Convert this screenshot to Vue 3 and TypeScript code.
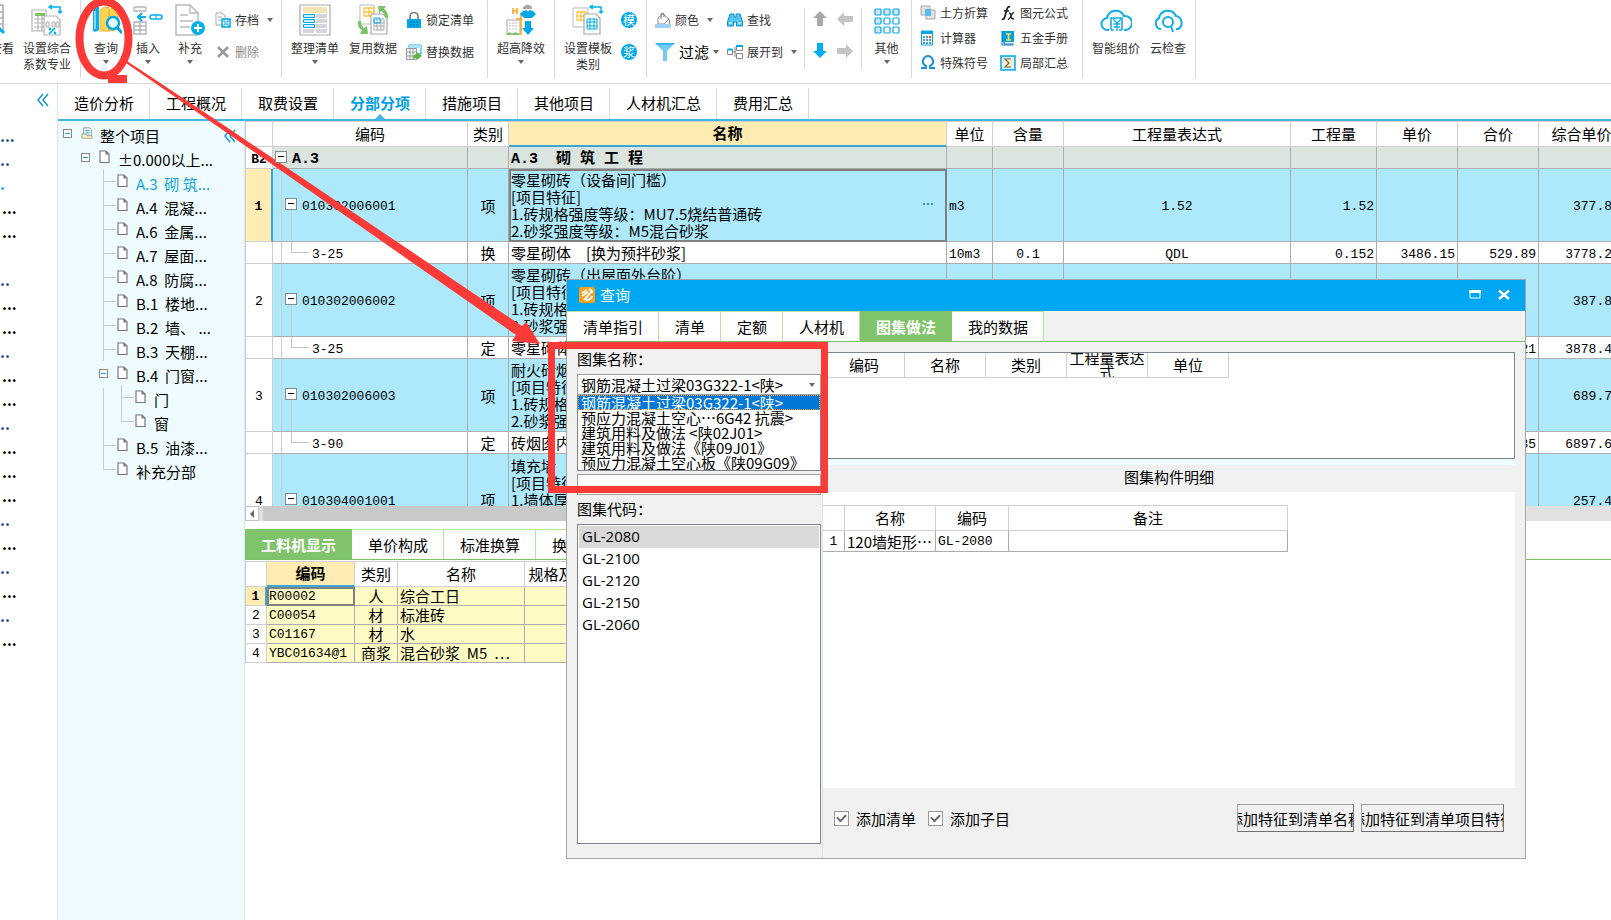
<script setup lang="ts">
import { ref } from 'vue'

interface TreeNode { label: string; depth: number; open?: boolean; active?: boolean; cls?: string }
interface BillRow {
  kind: 'group' | 'item' | 'sub'
  no: string
  code: string
  type: string
  name: string[]
  unit?: string
  ratio?: string
  expr?: string
  qty?: string
  price?: string
  total?: string
  composite?: string
  current?: boolean
  tall?: boolean
}

const mainTabs = ['造价分析', '工程概况', '取费设置', '分部分项', '措施项目', '其他项目', '人材机汇总', '费用汇总']
const activeMain = ref('分部分项')

const gutter = [
  { t: '...', c: 'navy' }, { t: '..', c: 'navy' }, { t: '.', c: 'cyan' }, { t: '...', c: 'dark' }, { t: '...', c: 'dark' },
  { t: '', c: 'dark' }, { t: '..', c: 'navy' }, { t: '...', c: 'dark' }, { t: '...', c: 'dark' }, { t: '..', c: 'navy' },
  { t: '...', c: 'dark' }, { t: '...', c: 'dark' }, { t: '..', c: 'navy' }, { t: '...', c: 'dark' }, { t: '...', c: 'dark' },
  { t: '...', c: 'dark' }, { t: '..', c: 'navy' }, { t: '...', c: 'dark' }, { t: '..', c: 'navy' }, { t: '...', c: 'dark' },
  { t: '..', c: 'navy' }, { t: '...', c: 'dark' },
]

const tree: TreeNode[] = [
  { label: '整个项目', depth: 0, open: true },
  { label: '±0.000以上...', depth: 1, open: true },
  { label: 'A.3  砌 筑...', depth: 2, active: true },
  { label: 'A.4  混凝...', depth: 2 },
  { label: 'A.6  金属...', depth: 2 },
  { label: 'A.7  屋面...', depth: 2 },
  { label: 'A.8  防腐...', depth: 2 },
  { label: 'B.1  楼地...', depth: 2 },
  { label: 'B.2  墙、 ...', depth: 2 },
  { label: 'B.3  天棚...', depth: 2 },
  { label: 'B.4  门窗...', depth: 2, open: true },
  { label: '门', depth: 3 },
  { label: '窗', depth: 3, cls: 'end' },
  { label: 'B.5  油漆...', depth: 2 },
  { label: '补充分部', depth: 2, cls: 'end' },
]

const rows: BillRow[] = [
  { kind: 'group', no: 'B2', code: 'A.3', type: '', name: ['A.3  砌 筑 工 程'] },
  { kind: 'item', no: '1', code: '010302006001', type: '项', name: ['零星砌砖（设备间门槛）', '[项目特征]', '1.砖规格强度等级：MU7.5烧结普通砖', '2.砂浆强度等级：M5混合砂浆'], unit: 'm3', expr: '1.52', qty: '1.52', composite: '377.8', current: true },
  { kind: 'sub', no: '', code: '3-25', type: '换', name: ['零星砌体　[换为预拌砂浆]'], unit: '10m3', ratio: '0.1', expr: 'QDL', qty: '0.152', price: '3486.15', total: '529.89', composite: '3778.2' },
  { kind: 'item', no: '2', code: '010302006002', type: '项', name: ['零星砌砖（出屋面外台阶）', '[项目特征]', '1.砖规格强度等级', '2.砂浆强度等级'], composite: '387.8' },
  { kind: 'sub', no: '', code: '3-25', type: '定', name: ['零星砌体'], total: '21', composite: '3878.4' },
  { kind: 'item', no: '3', code: '010302006003', type: '项', name: ['耐火砖烟囱', '[项目特征]', '1.砖规格强度等级', '2.砂浆强度等级'], composite: '689.7' },
  { kind: 'sub', no: '', code: '3-90', type: '定', name: ['砖烟囱内衬'], total: '35', composite: '6897.6' },
  { kind: 'item', no: '4', code: '010304001001', type: '项', name: ['填充墙（', '[项目特征]', '1.墙体厚度', '', ''], composite: '257.4', tall: true },
]

const lowerTabs = ['工料机显示', '单价构成', '标准换算', '换算信息']
const activeLower = ref('工料机显示')
const resources = [
  { code: 'R00002', type: '人', name: '综合工日' },
  { code: 'C00054', type: '材', name: '标准砖' },
  { code: 'C01167', type: '材', name: '水' },
  { code: 'YBC01634@1', type: '商浆', name: '混合砂浆  M5  ⋯' },
]

const queryTabs = ['清单指引', '清单', '定额', '人材机', '图集做法', '我的数据']
const activeQuery = ref('图集做法')
const atlases = ['钢筋混凝土过梁03G322-1<陕>', '预应力混凝土空心⋯6G42 抗震>', '建筑用料及做法 <陕02J01>', '建筑用料及做法《陕09J01》', '预应力混凝土空心板《陕09G09》']
const atlas = ref(atlases[0])
const codes = ['GL-2080', 'GL-2100', 'GL-2120', 'GL-2150', 'GL-2060']
const code = ref('GL-2080')
const keyword = ref('')
const addBill = ref(true)
const addItem = ref(true)
</script>

<template>
  <div class="app">
    <header class="ribbon">
      <div class="group g1">
        <button class="big view"><svg width="24" height="32" viewBox="0 0 24 32"><path d="M0 1h13v26H0M8 1v26M0 8h13M0 14h13M0 20h13" fill="none" stroke="#aaa" stroke-width="1.5" /><path d="M7 22l7 7" stroke="#00b0f0" stroke-width="3" /></svg><span>查看</span></button>
        <button class="big w66">
          <svg width="32" height="32" viewBox="0 0 32 32"><g fill="#fff" stroke="#b5b5b5" stroke-width="1.2"><path d="M1 6h14v21H1z" /><path d="M3 15h12M3 19h12M3 23h12M7 12v15M11 12v15" /><path d="M13 12h12l4 4v15H13z" /></g><path d="M4 9h10v3H4z" fill="#7cc266" /><g fill="none" stroke="#a5a5a5"><rect x="15" y="18" width="3" height="5" rx="1" /><rect x="21" y="18" width="3" height="5" rx="1" /><rect x="25" y="18" width="3" height="5" rx="1" /></g><path d="M18 30l6-6" stroke="#00b0f0" stroke-width="1.600" /><circle cx="19" cy="25" r="1.400" fill="#00b0f0" /><circle cx="24" cy="29" r="1.400" fill="#00b0f0" /><path d="M18 3h11v6M21 1l-3 2 3 2M27 7l2 2 2-2" fill="none" stroke="#00b0f0" stroke-width="1.500" /></svg>
          <span>设置综合<br>系数专业</span>
        </button>
      </div>
      <i class="sep" />
      <div class="group g2">
        <button class="big w42">
          <svg width="32" height="32" viewBox="0 0 32 32"><path d="M3 6q3-4 6-3v23q-3 3-6 1z" fill="#00b0f0" /><path d="M5 7v18" stroke="#fff" stroke-width="1" /><path d="M10 6q4-4 9-3v24h-9zM19 6q4-4 9-2v21q-4 2-9 2z" fill="#ffd454" stroke="#e8b93c" /><circle cx="23" cy="19" r="6" fill="#e9f8ff" stroke="#00a8e8" stroke-width="2.500" /><path d="M27 23l5 6" stroke="#00a8e8" stroke-width="3" /></svg>
          <span>查询</span><i class="caret" />
        </button>
        <button class="big w42">
          <svg width="32" height="32" viewBox="0 0 32 32"><g fill="none" stroke="#b5b5b5" stroke-width="1.400"><rect x="2" y="3" width="12" height="4" rx="1" /><path d="M2 18h12v12H2zM2 22h12M2 26h12M8 18v12" /></g><path d="M14 13H7M10 9l-4 4 4 4" stroke="#00b0f0" stroke-width="2" fill="none" /><rect x="18" y="11" width="12" height="4" rx="2" fill="none" stroke="#00b0f0" stroke-width="1.600" /><path d="M24 11v4" stroke="#00b0f0" /></svg>
          <span>插入</span><i class="caret" />
        </button>
        <button class="big w42">
          <svg width="32" height="32" viewBox="0 0 32 32"><path d="M2 1h14l8 8v22H2z" fill="#fff" stroke="#bbb" stroke-width="1.500" /><path d="M16 1v8h8M6 11h8M6 17h13M6 23h10" fill="none" stroke="#bbb" stroke-width="1.300" /><circle cx="24" cy="24" r="7" fill="#00b0f0" /><path d="M20 24h8M24 20v8" stroke="#fff" stroke-width="2" /></svg>
          <span>补充</span><i class="caret" />
        </button>
        <div class="stack">
          <button class="small"><svg width="16" height="16" viewBox="0 0 16 16"><path d="M1 1h6l3 3v9H1z" fill="#fff" stroke="#aaa" /><path d="M3 5h4M3 8h3" stroke="#aaa" /><path d="M7 7h8v8H7z" fill="#fff" stroke="#00a8e8" stroke-width="1.500" /><path d="M9 7v3h4V7M9 15v-3h4v3" fill="none" stroke="#00a8e8" /></svg>存档<i class="caret far" /></button>
          <button class="small dim"><svg width="16" height="16" viewBox="0 0 16 16"><path d="M3 3l10 10M13 3L3 13" stroke="#999" stroke-width="2.500" /></svg>删除</button>
        </div>
      </div>
      <i class="sep" />
      <div class="group g3">
        <button class="big w58">
          <svg width="32" height="32" viewBox="0 0 32 32"><path d="M1 1h30v30H1z" fill="#fff" stroke="#aaa" stroke-width="1.200" /><path d="M4 3h24v6H4z" fill="#f3e3b3" /><path d="M17 10h11v4H17zM17 15h11v4H17zM17 20h11v4H17zM17 25h11v4H17zM4 25h11v4H4z" fill="#d5d5dc" /><path d="M4.500 10.500h11v3h-11zM4.500 15.500h11v3h-11zM4.500 20.500h11v3h-11z" fill="#d7eefa" stroke="#00a8e8" /></svg>
          <span>整理清单</span><i class="caret" />
        </button>
        <button class="big w58">
          <svg width="32" height="32" viewBox="0 0 32 32"><path d="M3 1h14v19H3z" fill="#fff" stroke="#bbb" /><path d="M7 4h10v8H7zM7 8h10M12 4v8" fill="none" stroke="#ffc53a" stroke-width="1.300" /><path d="M14 10h12l4 4v16H14z" fill="#fff" stroke="#aaa" stroke-width="1.200" /><path d="M17 15h10v11H17zM17 19h10M17 22h10M20 15v11M24 15v11" fill="none" stroke="#aaa" /><path d="M17 14h6v5h-6z" fill="none" stroke="#00b0f0" /><path d="M31 14q0-7-4-9l2-3-8 0 1 8 2-3q4 2 4 7zM1 17q-1 7 4 9l-2 4 8 0-1-8-3 2q-3-2-3-7z" fill="#7cc266" /></svg>
          <span>复用数据</span>
        </button>
        <div class="stack">
          <button class="small"><svg width="16" height="16" viewBox="0 0 16 16"><path d="M4 7V4.500a4 4 0 018 0V7" fill="none" stroke="#777" stroke-width="1.600" /><path d="M1 7h14v9H1z" fill="#00a8e8" /><path d="M4 10h8M4 13h8" stroke="#086fa8" stroke-dasharray="2 1" /></svg>锁定清单</button>
          <button class="small"><svg width="16" height="16" viewBox="0 0 16 16"><path d="M3 1h12v9H3z" fill="#fff" stroke="#00a8e8" /><path d="M3 1h12v3H3z" fill="#aee3f7" /><path d="M.500 4.500h10v11H.500zM.500 8h10M.500 12h10M4 4.500v11M7 4.500v11" fill="#fff" stroke="#999" /><path d="M7 15q0-5 4-5V8l5 4-5 4v-2q-2 0-4 1z" fill="#5cb83c" /></svg>替换数据</button>
        </div>
      </div>
      <i class="sep" />
      <div class="group g4">
        <button class="big w66">
          <svg width="32" height="32" viewBox="0 0 32 32"><path d="M2 16h13v14H2z" fill="#fff" stroke="#aaa" /><path d="M4 19h9M4 22h9M4 25h9" stroke="#bbb" stroke-dasharray="2 1" /><path d="M1 31q3-5 6-1 4-4 8 1z" fill="#7cc266" /><path d="M8 4v6M12 4v6M8 7h4M16 9v22M11 15h6" stroke="#ffa51f" stroke-width="1.600" fill="none" /><path d="M18 3q5-5 9 0v2h-9z" fill="#aaa" /><path d="M18 7l4-1 1 2 1-2 4 1 3 3-4 4h-8l-4-4z" fill="#00a8e8" /><path d="M20 17h6v7h3l-6 7-6-7h3z" fill="#00a8e8" /></svg>
          <span>超高降效</span><i class="caret" />
        </button>
      </div>
      <i class="sep" />
      <div class="group g5">
        <button class="big w66">
          <svg width="32" height="32" viewBox="0 0 32 32"><path d="M1 4h15v19H1z" fill="#fff" stroke="#bbb" /><path d="M5 8h9v8H5zM5 12h9M9 8v8" fill="none" stroke="#ffc53a" stroke-width="1.300" /><path d="M12 10h12l4 4v16H12z" fill="#fff" stroke="#aaa" stroke-width="1.200" /><path d="M15 15h10v10H15zM15 18h10M15 22h10M18 15v10M22 15v10" fill="none" stroke="#00a8e8" /><path d="M18 3h11v6M21 1l-3 2 3 2M27 7l2 2 2-2" fill="none" stroke="#00b0f0" stroke-width="1.500" /></svg>
          <span>设置模板<br>类别</span>
        </button>
        <div class="stack tight">
          <button class="round">模</button>
          <button class="round">浆</button>
        </div>
      </div>
      <i class="sep" />
      <div class="group g6">
        <div class="stack">
          <button class="small"><svg width="16" height="16" viewBox="0 0 16 16"><path d="M3 6l5-4 6 5-5 5H3z" fill="#fff" stroke="#888" /><path d="M6 7V2q1-2 3 0v3M13 6q3 3 1 6" fill="none" stroke="#777" /><path d="M0 12h16v4H0z" fill="#9fd3f3" /></svg>颜色<i class="caret far" /></button>
          <button class="small large"><svg width="20" height="18" viewBox="0 0 20 18"><path d="M0 0h20l-8 8v10H8V8z" fill="#6fcbf3" /><path d="M0 0h20l-2 2H2z" fill="#3db7ee" /></svg>过滤<i class="caret" /></button>
        </div>
        <div class="stack">
          <button class="small"><svg width="16" height="16" viewBox="0 0 16 16"><path d="M3 2h4v3h2V2h4l2.500 8v4h-6v-4h-3v4h-6v-4z" fill="#57c3ef" stroke="#0a93cc" /><path d="M2 11h3M11 11h3" stroke="#fff" /></svg>查找</button>
          <button class="small"><svg width="16" height="16" viewBox="0 0 16 16"><path d="M.500 5.500h5v5h-5z" fill="#fff" stroke="#888" /><path d="M.500 5.500h5" stroke="#00a8e8" stroke-width="2" /><path d="M6 8h3M8 3v10" stroke="#888" /><path d="M9.500 1.500h6v5h-6zM9.500 9.500h6v5h-6z" fill="#fff" stroke="#888" /><path d="M9 1h7v2H9z" fill="#00a8e8" /></svg>展开到<i class="caret far" /></button>
        </div>
      </div>
      <i class="sep short" />
      <div class="group g7">
        <button aria-label="上移"><svg width="14" height="16" viewBox="0 0 14 16"><path d="M7 0l7 7h-4v8H4V7H0z" fill="#a9a9a9" /></svg></button>
        <button aria-label="左移"><svg width="16" height="14" viewBox="0 0 16 14"><path d="M0 7l7-7v4h9v6H7v4z" fill="#c4c4c4" /></svg></button>
        <button aria-label="下移"><svg width="14" height="16" viewBox="0 0 14 16"><path d="M7 15l7-7h-4V0H4v8H0z" fill="#00b0f0" /></svg></button>
        <button aria-label="右移"><svg width="16" height="14" viewBox="0 0 16 14"><path d="M16 7L9 0v4H0v6h9v4z" fill="#c4c4c4" /></svg></button>
      </div>
      <i class="sep short" />
      <div class="group g8">
        <button class="big w49">
          <svg width="26" height="32" viewBox="0 0 26 32"><g stroke="#00a8e8" stroke-width="1.200" fill="#cfe6f8"><rect x="1" y="5" width="6" height="6" rx="1" /><rect x="10" y="5" width="6" height="6" rx="1" /><rect x="19" y="5" width="6" height="6" rx="1" /><rect x="1" y="14" width="6" height="6" rx="1" /><rect x="1" y="23" width="6" height="6" rx="1" /></g><g stroke="#00a8e8" stroke-width="1.200" fill="#fff"><rect x="10" y="14" width="6" height="6" rx="1" /><rect x="19" y="14" width="6" height="6" rx="1" /><rect x="10" y="23" width="6" height="6" rx="1" /><rect x="19" y="23" width="6" height="6" rx="1" /></g></svg>
          <span>其他</span><i class="caret" />
        </button>
      </div>
      <i class="sep" />
      <div class="group g9">
        <button class="small"><svg width="16" height="16" viewBox="0 0 16 16"><path d="M1 1h9v9H1zM6 5h9v9H6z" fill="#e2e2e2" stroke="#aaa" /><path d="M5 4h6v7H5z" fill="#58bfe8" /></svg>土方折算</button>
        <button class="small"><svg width="16" height="16" viewBox="0 0 16 16"><g fill="none" stroke="#222"><path d="M2 14q2 1 3-3l2-7q1-3 3-2" stroke-width="1.800" /><path d="M4 6h5M9 8q2 0 2 3t3 3M14 8q-1-1-3 3t-3 3" stroke-width="1.300" /></g></svg>图元公式</button>
        <button class="small"><svg width="16" height="16" viewBox="0 0 16 16"><path d="M1.500 1h11v14h-11z" fill="#fff" stroke="#00a8e8" /><path d="M1 1h12v3H1z" fill="#00a8e8" /><path d="M3 7h8M3 10h8M3 13h8" stroke="#4a9fd0" stroke-dasharray="2 1" stroke-width="2" /><path d="M9 6h2v2H9z" fill="#f05030" /></svg>计算器</button>
        <button class="small"><svg width="16" height="16" viewBox="0 0 16 16"><path d="M2 1h12v11H2z" fill="#00a0e0" /><path d="M2 1v14h11M4 12v2h10" fill="none" stroke="#0878b0" /><path d="M6 4h5M6 10h5M8.500 4v6" stroke="#ffe040" stroke-width="1.600" /></svg>五金手册</button>
        <button class="small"><svg width="16" height="16" viewBox="0 0 16 16"><path d="M1 13h5v-2q-4-2-3-6 2-4 5-4t5 4q1 4-3 6v2h5" fill="none" stroke="#1f8fcf" stroke-width="2" /></svg>特殊符号</button>
        <button class="small"><svg width="16" height="16" viewBox="0 0 16 16"><path d="M1 1h14v14H1z" fill="#d9f1fb" stroke="#00a8e8" stroke-width="1.500" /><path d="M3 4h10v8H3z" fill="#fff2c0" /><path d="M11 4H5l4 4-4 4h6" fill="none" stroke="#666" stroke-width="1.200" /></svg>局部汇总</button>
      </div>
      <i class="sep" />
      <div class="group g10">
        <button class="big w52">
          <svg width="32" height="32" viewBox="0 0 32 32"><g fill="none" stroke="#12aee8" stroke-width="2"><path d="M9 26H8a6 6 0 01-1-12 9 9 0 0117-2 7 7 0 012 14h-2" /><path d="M11 26V14h11v12M11 26h3M22 26h-3" stroke-width="1.600" /><path d="M13 15l4 4 4-4M17 19v8M13.500 20h6.500M13.500 23h6.500" stroke-width="1.300" /></g></svg>
          <span>智能组价</span>
        </button>
        <button class="big w52">
          <svg width="32" height="32" viewBox="0 0 32 32"><g fill="none" stroke="#12aee8" stroke-width="2"><path d="M9 25H8a6 6 0 01-1-11 9 9 0 0117-2 7 7 0 012 13h-2" /><circle cx="16" cy="18" r="5" /><path d="M19 22l2 6" /></g></svg>
          <span>云检查</span>
        </button>
      </div>
      <i class="sep" />
    </header>

    <div class="work">
      <aside class="gutter">
        <button class="fold" aria-label="收起"><svg width="12" height="14" viewBox="0 0 12 14"><path d="M6 1L1 7l5 6M11 1L6 7l5 6" fill="none" stroke="#1a9ac8" stroke-width="1.500" /></svg></button>
        <div v-for="(g, i) in gutter" :key="i" class="dots" :class="g.c">{{ g.t }}</div>
      </aside>

      <section class="page">
        <nav class="tabs">
          <button v-for="t in mainTabs" :key="t" :class="{ on: t === activeMain }" @click="activeMain = t">{{ t }}</button>
        </nav>
        <div class="columns">
          <aside class="tree">
            <button class="fold inner" aria-label="收起"><svg width="12" height="14" viewBox="0 0 12 14"><path d="M6 1L1 7l5 6M11 1L6 7l5 6" fill="none" stroke="#1a9ac8" stroke-width="1.500" /></svg></button>
            <ul>
              <li v-for="(n, i) in tree" :key="i" :class="['d' + n.depth, n.cls, { active: n.active }]">
                <i v-if="n.open" class="toggle" />
                <svg v-if="n.depth === 0" class="ico" width="12" height="14" viewBox="0 0 14 14"><path d="M3 1h7l2 2v8H3z" fill="#fff" stroke="#888" /><path d="M5 4h5M5 6h5M5 8h5" stroke="#2aa6d8" /><path d="M1 8h4l1 2h7v3H1z" fill="#fff3b8" stroke="#999" /></svg>
                <svg v-else class="ico" width="12" height="14" viewBox="0 0 12 14"><path d="M1 1h6l3 3v8.500H1zM7 1v3h3" fill="#fff" stroke="#777" stroke-width="1.200" /></svg>
                <span>{{ n.label }}</span>
              </li>
            </ul>
          </aside>

          <main class="main">
            <div class="bill">
              <table>
                <colgroup>
                  <col class="c28"><col class="c195"><col class="c41"><col class="c438"><col class="c46"><col class="c71"><col class="c227"><col class="c86"><col class="c81"><col class="c81"><col class="c86">
                </colgroup>
                <thead>
                  <tr><th /><th>编码</th><th>类别</th><th class="picked">名称</th><th>单位</th><th>含量</th><th>工程量表达式</th><th>工程量</th><th>单价</th><th>合价</th><th>综合单价</th></tr>
                </thead>
                <tbody>
                  <tr v-for="(r, i) in rows" :key="i" :class="[r.kind, { current: r.current, tall: r.tall }]">
                    <td class="no">{{ r.no }}</td>
                    <td class="code"><i v-if="r.kind !== 'sub'" class="box" /><i v-else class="elbow" />{{ r.code }}</td>
                    <td class="mid">{{ r.type }}</td>
                    <td class="name"><div v-for="(l, k) in r.name" :key="k" class="line">{{ l }}</div><button v-if="r.current" class="more" aria-label="编辑"><svg width="12" height="4" viewBox="0 0 12 4"><path d="M1 1h2v2H1zM5 1h2v2H5zM9 1h2v2H9z" fill="#3f8fd0" /></svg></button></td>
                    <td class="num unit">{{ r.unit }}</td>
                    <td class="num mid">{{ r.ratio }}</td>
                    <td class="num mid">{{ r.expr }}</td>
                    <td class="num end">{{ r.qty }}</td>
                    <td class="num end">{{ r.price }}</td>
                    <td class="num end">{{ r.total }}</td>
                    <td class="num end cut">{{ r.composite }}</td>
                  </tr>
                </tbody>
              </table>
            </div>
            <div class="scroll"><button aria-label="向左滚动"><i /></button><div class="thumb" /></div>
            <nav class="subtabs lower">
              <button v-for="t in lowerTabs" :key="t" :class="{ on: t === activeLower }" @click="activeLower = t">{{ t }}</button>
            </nav>
            <table class="res">
              <colgroup><col class="c22"><col class="c88"><col class="c43"><col class="c127"><col class="c83"></colgroup>
              <thead><tr><th /><th class="picked">编码</th><th>类别</th><th>名称</th><th>规格及型号</th></tr></thead>
              <tbody>
                <tr v-for="(r, i) in resources" :key="r.code" :class="{ current: i === 0 }">
                  <td class="no">{{ i + 1 }}</td><td class="num key">{{ r.code }}</td><td class="mid">{{ r.type }}</td><td class="txt">{{ r.name }}</td><td />
                </tr>
              </tbody>
            </table>
          </main>
        </div>
      </section>
    </div>

    <div class="dialog" role="dialog" aria-label="查询窗口">
      <div class="title">
        <svg width="16" height="16" viewBox="0 0 16 16"><rect width="16" height="16" rx="2" fill="#f9a11b" /><path d="M3 6l5-3M3 9l6-4M5 13l8-9M7 13q5 0 6-4M10 2l4 3" fill="none" stroke="#fff" stroke-width="2" /></svg>
        <span>查询</span>
        <button aria-label="最大化"><svg width="12" height="10" viewBox="0 0 12 10"><path d="M1 1h10v7H1z" fill="none" stroke="#fff" /><path d="M0 0h12v3H0z" fill="#fff" /></svg></button>
        <button aria-label="关闭"><svg width="12" height="10" viewBox="0 0 12 10"><path d="M1 0.500l10 8.500M11 0.500L1 9" stroke="#fff" stroke-width="2.400" /></svg></button>
      </div>
      <nav class="subtabs">
        <button v-for="t in queryTabs" :key="t" :class="{ on: t === activeQuery }" @click="activeQuery = t">{{ t }}</button>
      </nav>
      <div class="content">
        <div class="left">
          <label for="atlas">图集名称：</label>
          <div class="combo">
            <select id="atlas" v-model="atlas"><option v-for="a in atlases" :key="a">{{ a }}</option></select>
            <i class="caret" />
          </div>
          <ul class="drop" role="listbox" aria-label="图集">
            <li v-for="a in atlases" :key="a" role="option" :aria-selected="a === atlas" :class="{ on: a === atlas }" @click="atlas = a">{{ a }}</li>
          </ul>
          <input v-model="keyword" type="text" aria-label="筛选">
          <span class="cap">图集代码：</span>
          <ul class="codes" role="listbox" aria-label="代码">
            <li v-for="c in codes" :key="c" role="option" :aria-selected="c === code" :class="{ on: c === code }" @click="code = c">{{ c }}</li>
          </ul>
        </div>
        <div class="right">
          <div class="top">
            <table>
              <thead><tr><th>编码</th><th>名称</th><th>类别</th><th><div class="wrap">工程量表达式</div></th><th>单位</th></tr></thead>
            </table>
          </div>
          <div class="band" />
          <h2>图集构件明细</h2>
          <div class="detail">
            <table>
              <colgroup><col class="c22"><col class="c91"><col class="c73"><col class="c279"></colgroup>
              <thead><tr><th /><th>名称</th><th>编码</th><th>备注</th></tr></thead>
              <tbody><tr><td class="mid num">1</td><td>120墙矩形⋯</td><td class="num">GL-2080</td><td /></tr></tbody>
            </table>
          </div>
          <div class="foot">
            <label><input v-model="addBill" type="checkbox">添加清单</label>
            <label><input v-model="addItem" type="checkbox">添加子目</label>
            <span class="grow" />
            <button class="b1"><span>添加特征到清单名称</span></button>
            <button class="b2"><span>添加特征到清单项目特征</span></button>
          </div>
        </div>
      </div>
    </div>

    <svg class="marks" width="840" height="500" viewBox="0 0 840 500" aria-hidden="true">
      <ellipse cx="104" cy="38.500" rx="24.500" ry="37" fill="none" stroke="#fc3a38" stroke-width="8" />
      <path d="M108 75h19v8h-19z" fill="#fc3a38" />
      <path d="M127 61L219 122L522 326L526 322L540 344L512 341L516 335L217 126L126 63z" fill="#fc3a38" />
      <rect x="551.500" y="345.500" width="273" height="144" fill="none" stroke="#fc3a38" stroke-width="7" />
    </svg>
  </div>
</template>

<style>
html, body { margin: 0; background: #fff; }
</style>

<style scoped>
.app, .app * { box-sizing: border-box; }
.app { position: relative; display: flex; flex-direction: column; min-height: 100vh; overflow: hidden; font-family: "Noto Sans CJK SC", sans-serif; font-size: 15px; line-height: 17px; color: #000; background: #fff; }
button { border: 0; padding: 0; margin: 0; background: none; font: inherit; color: inherit; }
ul { list-style: none; margin: 0; padding: 0; }
svg { flex: none; }
table { border-collapse: separate; border-spacing: 0; table-layout: fixed; }
th { font-weight: 400; }

/* ribbon */
.ribbon { display: flex; flex: none; height: 84px; border-bottom: 1px solid #d9d9d9; font-size: 12px; line-height: 16px; color: #333; }
.sep { flex: none; width: 1px; height: 78px; background: #d9d9d9; }
.sep.short { height: 61px; margin-top: 8px; }
.group { display: flex; flex: none; overflow: hidden; padding-top: 4px; }
.g1 { width: 80px; justify-content: flex-end; }
.g2 { width: 200px; padding-left: 4px; }
.g3 { width: 205px; padding-left: 4px; }
.g4 { width: 66px; }
.g5 { width: 91px; }
.g6 { width: 157px; padding-left: 4px; }
.g7 { width: 56px; padding-left: 2px; display: grid; grid-template-columns: 25px 25px; grid-template-rows: 32px 32px; place-items: center; }
.g8 { width: 49px; }
.g9 { width: 170px; padding: 0 0 0 8px; display: grid; grid-template-columns: 80px 80px; grid-template-rows: 25px 25px 25px; }
.g10 { width: 112px; padding-left: 7px; }
.big { display: flex; flex: none; flex-direction: column; align-items: center; text-align: center; white-space: nowrap; }
.big > span { margin-top: 4px; }
.big .caret { margin-top: 4px; }
.view { width: 24px; }
.w42 { width: 42px; } .w49 { width: 49px; } .w52 { width: 52px; } .w58 { width: 58px; } .w66 { width: 66px; }
.caret { flex: none; width: 0; height: 0; border: 3px solid transparent; border-top: 4px solid #666; border-bottom: 0; }
.stack { display: flex; flex-direction: column; padding-left: 4px; }
.small { display: flex; align-items: center; gap: 4px; height: 32px; white-space: nowrap; }
.small .far { margin-left: 4px; }
.small.large { font-size: 15px; color: #000; }
.g6 .stack { width: 72px; }
.g6 .stack + .stack { width: 80px; }
.g9 .small { height: 25px; }
.dim { color: #8a8a8a; }
.tight { padding: 8px 0 0; gap: 16px; }
.round { width: 16px; height: 16px; border-radius: 50%; background: #00a8e8; color: #fff; font-size: 12px; line-height: 16px; }

/* left gutter */
.work { display: flex; flex: 1; }
.gutter { flex: none; width: 58px; border-right: 1px solid #dfe6e8; background: #fff; }
.fold { display: block; height: 14px; margin: 8px 0 22px 37px; }
.dots { height: 24px; line-height: 16px; font-weight: 700; }
.dots.dark { padding-left: 2px; }
.navy { color: #1d4e89; } .cyan { color: #12a5d6; }

/* section tabs */
.page { display: flex; flex: 1; flex-direction: column; min-width: 0; }
.tabs { display: flex; height: 37px; padding-top: 4px; border-bottom: 2px solid #41b6e6; }
.tabs button { position: relative; padding: 0 15px 2px 16px; border-right: 1px solid #d9d9d9; }
.tabs .on { color: #00a0e9; font-weight: 700; }
.tabs .on::after { content: ""; position: absolute; left: 50%; bottom: 0; margin-left: -5px; border: 5px solid transparent; border-bottom-color: #41b6e6; border-top: 0; }
.columns { display: flex; flex: 1; }

/* project tree */
.tree { position: relative; flex: none; width: 187px; padding-top: 3px; background: #effcff; border-right: 1px solid #dde6e8; }
.fold.inner { position: absolute; right: 8px; top: 7px; margin: 0; }
.tree li { position: relative; display: flex; align-items: center; height: 24px; white-space: pre; }
.tree li span { padding: 0 0 2px 7px; }
.tree .ico { margin-top: -7px; }
.tree .toggle { flex: none; position: relative; width: 9px; height: 9px; margin: -6px 9px 0 0; border: 1px solid #888; background: #fff; }
.toggle::before { content: ""; position: absolute; left: 1px; right: 1px; top: 3px; height: 1px; background: #2a9ac8; }
.tree .d0 { padding-left: 5px; }
.tree .d1 { padding-left: 23px; }
.tree .d2 { padding-left: 59px; }
.tree .d3 { padding-left: 77px; }
.tree .d2:has(.toggle) { padding-left: 41px; }
.d2:not(:has(.toggle))::before, .d3::before { content: ""; position: absolute; left: 45px; top: 0; width: 13px; height: 9px; border-bottom: 1px solid #c4cccc; }
.d2:not(:has(.toggle))::after, .d3::after { content: ""; position: absolute; left: 45px; top: -3px; bottom: 3px; border-left: 1px solid #c4cccc; }
.tree .d3::before { left: 63px; }
.tree .d3::after { left: 63px; }
.d3 .ico { box-shadow: none; }
.d3 { background: linear-gradient(#c4cccc, #c4cccc) 45px 0 / 1px 100% no-repeat; }
.tree .end::after { bottom: 15px; }
.active { color: #14a3d6; }

/* bill table */
.main { flex: 1; min-width: 0; overflow: hidden; background: #fff; }
.bill { height: 385px; overflow: hidden; border-top: 1px solid #d0d0d0; }
.bill table { width: 1380px; }
.c28 { width: 28px; } .c195 { width: 195px; } .c41 { width: 41px; } .c438 { width: 438px; } .c46 { width: 46px; } .c71 { width: 71px; } .c227 { width: 227px; } .c86 { width: 86px; } .c81 { width: 81px; }
.c22 { width: 22px; } .c88 { width: 88px; } .c43 { width: 43px; } .c127 { width: 127px; } .c83 { width: 83px; } .c91 { width: 91px; } .c73 { width: 73px; } .c279 { width: 279px; }
.main th { height: 25px; padding: 0 0 2px; border: 0 solid #d0d0d0; border-width: 0 1px 1px 0; white-space: nowrap; overflow: hidden; }
.main th:first-child, .main td.no { border-left: 1px solid #d0d0d0; }
.main th.picked { background: #ffecb3; font-weight: 700; border-bottom: 2px solid #38a6d8; }
.main td { padding: 0 2px; border: 0 solid #adadad; border-width: 0 1px 1px 0; white-space: pre; }
.main td.no { padding: 0; text-align: center; background: #fff; border-color: #d0d0d0; font-family: "Liberation Mono", monospace; font-size: 13px; }
.bill tr { height: 22px; }
.item { background: #aee9fb; }
.bill .item { height: 73px; }
.bill .item.tall { height: 92px; }
tr.group { display: table-row; background: #dbe4df; font-weight: 700; }
.mid { text-align: center; }
.end { text-align: right; }
.bill td.cut { padding-right: 12px; }
.num, .code { font-family: "Liberation Mono", monospace; font-size: 13px; }
.bill td.num, .bill td.code, .bill td.no { padding-top: 3px; }
td.code { position: relative; padding-left: 29px; }
td.code::before { content: ""; position: absolute; left: 8px; top: 0; bottom: 0; border-left: 1px solid #c8d0d0; }
tr.group td.code { padding-left: 19px; font-size: 15px; }
tr.group td.code::before { display: none; }
tr.group td.name { padding-top: 3px; font-family: "Liberation Mono", "Noto Sans CJK SC", monospace; }
.sub td.code { padding-left: 39px; }
.item td.code::after { content: ""; position: absolute; left: 18px; top: 50%; bottom: 0; border-left: 1px solid #c8d0d0; }
.box { position: absolute; z-index: 1; left: 12px; top: 50%; width: 12px; height: 12px; margin-top: -7px; border: 1px solid #8a8a8a; background: #fff; }
.box::after { content: ""; position: absolute; left: 2px; right: 2px; top: 4px; height: 1px; background: #000; }
tr.group .box { left: 2px; }
.elbow { position: absolute; left: 18px; top: 0; width: 18px; height: 11px; border: 0 solid #c4c4c4; border-width: 0 0 1px 1px; }
td.name { position: relative; vertical-align: middle; overflow: hidden; }
.line { height: 17px; }
.main .current td.no { background: #ffecb3; border-right: 2px solid #38a6d8; font-weight: 700; }
.bill .current td.name { outline: 2px solid #808080; outline-offset: -2px; }
.more { position: absolute; right: 12px; top: 33px; height: 4px; display: flex; }
.scroll { display: flex; gap: 4px; height: 15px; background: #e1e1e1; }
.scroll button { width: 14px; border: 1px solid #c4c4c4; background: #fff; display: grid; place-items: center; }
.scroll button i { border: 4px solid transparent; border-right-color: #666; border-left: 0; }
.thumb { width: 1100px; background: #c9c9c9; }

/* green tab strips */
.subtabs { display: flex; flex: none; height: 31px; border-bottom: 1px solid #7cc266; }
.subtabs.lower { margin-top: 8px; }
.subtabs button { padding: 0 15px 0 16px; border: 0 solid #b5e3a2; border-width: 1px 1px 0 0; background: #fff; }
.subtabs .on { background: #7fc36a; border-color: #7fc36a; color: #fff; font-weight: 700; }
.res { width: 363px; margin-top: 1px; border-top: 1px solid #d0d0d0; }
.res tbody tr { height: 19px; background: #fdfac4; }
.main .res td { line-height: 16px; }
.res .current .key { outline: 2px solid #808080; outline-offset: -2px; }
.main .res td.num, .main .res td.no { padding-top: 2px; }

/* query dialog */
.dialog { position: absolute; left: 566px; top: 279px; width: 960px; height: 580px; display: flex; flex-direction: column; background: #f1f1f1; border: 1px solid #a5a5a5; }
.title { display: flex; flex: none; align-items: center; gap: 5px; height: 31px; padding: 0 15px 2px 12px; background: #00a8f3; color: #fff; }
.title span { flex: 1; }
.title button { width: 12px; height: 12px; margin-left: 12px; display: grid; place-items: center; }
.content { display: flex; flex: 1; min-height: 0; }
.left { display: flex; flex: none; flex-direction: column; width: 256px; padding: 8px 1px 14px 10px; border-right: 1px solid #d3e6ee; }
.left label, .cap { line-height: 17px; height: 17px; }
.combo { position: relative; margin-top: 7px; }
.combo .caret { position: absolute; right: 6px; top: 9px; }
.combo select { display: block; width: 100%; height: 21px; padding: 0 3px 1px; border: 1px solid #a0a0a0; border-radius: 0; appearance: none; background: #fff; font: inherit; color: #000; }
.drop { height: 76px; border: 1px solid #80838c; border-top: 0; background: #fff; overflow: hidden; }
.drop li { height: 15px; padding-left: 3px; line-height: 15px; white-space: pre; }
.drop .on { background: #0078d7; color: #fff; outline: 1px dotted #ff9632; outline-offset: -1px; }
.left input { flex: none; height: 21px; margin: 3px 0 5px; border: 1px solid #a0a0a0; background: #fff; font: inherit; }
.codes { flex: 1; margin-top: 7px; padding: 1px; border: 1px solid #80838c; background: #fff; }
.codes li { height: 22px; padding-left: 3px; line-height: 21px; font-family: "Open Sans", sans-serif; }
.codes .on { background: #d9d9d9; }
.right { display: flex; flex: 1; flex-direction: column; min-width: 0; padding: 10px 10px 0 0; }
.top { height: 107px; padding-left: 1px; border: 1px solid #808690; border-left: 0; background: #fff; }
.right th { height: 25px; padding: 0 0 2px; border: 0 solid #d0d0d0; border-width: 0 1px 1px 0; }
.top table { width: 405px; }
.wrap { height: 24px; margin: 0 2px -2px; line-height: 14px; overflow: hidden; display: flex; align-items: center; }
.band { height: 6px; background: #effcff; }
h2 { margin: 0; height: 27px; line-height: 23px; text-align: center; font-size: 15px; font-weight: 400; }
.detail { height: 296px; padding-top: 13px; background: #fff; }
.detail table { width: 465px; border-top: 1px solid #d0d0d0; }
.detail td { height: 21px; padding: 0 2px; border: 0 solid #adadad; border-width: 0 1px 1px 0; white-space: nowrap; overflow: hidden; }
.foot { display: flex; align-items: center; gap: 7px; height: 60px; padding: 0 11px 0 11px; }
.foot label { display: flex; align-items: center; gap: 7px; margin-right: 5px; }
.foot input { appearance: none; width: 15px; height: 15px; margin: 0; border: 1px solid #999; background: #fff; display: grid; place-items: center; }
.foot input:checked::after { content: ""; width: 7px; height: 4px; margin-top: -2px; border: solid #667; border-width: 0 0 2px 2px; transform: rotate(-45deg); }
.grow { flex: 1; }
.foot button { display: flex; justify-content: center; align-items: center; height: 28px; border: 1px solid #a0a0a0; border-right-color: #707070; border-bottom-color: #707070; overflow: hidden; white-space: nowrap; }
.foot button span { flex: none; }
.b1 { width: 117px; } .b2 { width: 143px; }

.marks { position: absolute; left: 0; top: 0; pointer-events: none; }
</style>
